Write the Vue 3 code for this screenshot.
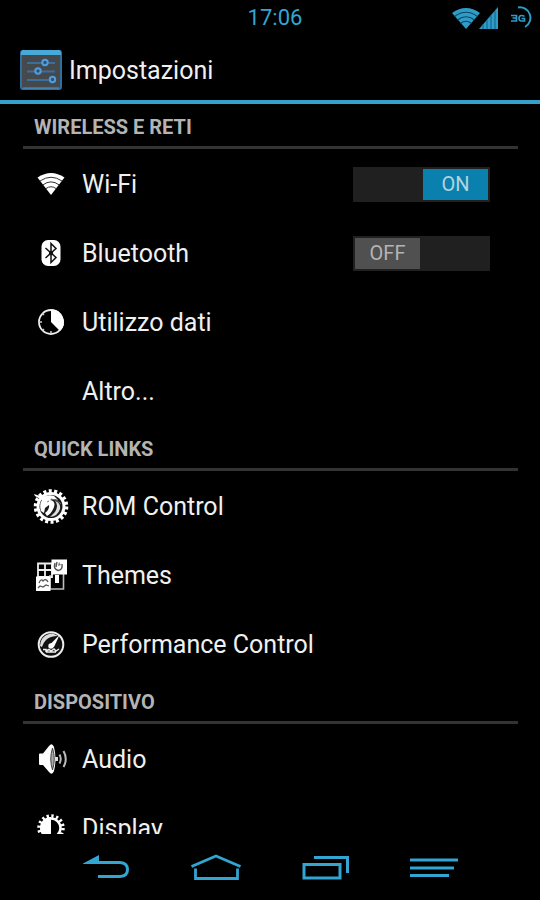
<script setup>
import { reactive } from 'vue'

const sections = reactive([
  {
    title: 'WIRELESS E RETI',
    items: [
      { label: 'Wi-Fi', icon: 'wifi', toggle: true, on: true },
      { label: 'Bluetooth', icon: 'bluetooth', toggle: true, on: false },
      { label: 'Utilizzo dati', icon: 'data' },
      { label: 'Altro...', icon: '' },
    ],
  },
  {
    title: 'QUICK LINKS',
    items: [
      { label: 'ROM Control', icon: 'rom' },
      { label: 'Themes', icon: 'themes' },
      { label: 'Performance Control', icon: 'performance' },
    ],
  },
  {
    title: 'DISPOSITIVO',
    items: [
      { label: 'Audio', icon: 'audio' },
      { label: 'Display', icon: 'display' },
    ],
  },
])
</script>

<template>
  <div class="screen">
    <div class="status">
      <time class="clock">17:06</time>
      <div class="indicators">
        <svg class="signals" viewBox="0 0 46 24" aria-hidden="true">
          <path d="M0 7Q14 -3 28 7L14 23Z" fill="#2f9cc8" />
          <path d="M2.500 10.500Q14 2 25.500 10.500M5.500 14Q14 7.500 22.500 14M8.500 17.500Q14 13 19.500 17.500" fill="none" stroke="#0b4660" stroke-width="1.2" />
          <path d="M27 23L46 1V23Z" fill="#2f9cc8" />
          <path d="M31 18V23M35 14V23M39 9V23M43 5V23" stroke="#0f6084" stroke-width="1" />
        </svg>
        <svg class="battery" viewBox="0 0 22 24" aria-hidden="true">
          <g fill="none" stroke="#2f9cc8">
            <path d="M8 1.500A10.500 10.500 0 0 1 15 21" stroke-width="2" />
            <path d="M1 9.500H6.500V12H2.500M6.500 12V15H1M14.500 10.500Q13.500 9.500 11.500 9.500Q9 9.500 9 12.200T11.500 15H14.500V12.500H11.500" stroke-width="1.600" />
          </g>
        </svg>
      </div>
    </div>

    <header class="titlebar">
      <svg class="app-icon" viewBox="0 0 42 40" aria-hidden="true">
        <rect x="1" y="1" width="40" height="38" rx="2" fill="#46494c" stroke="#2d6f9e" stroke-width="2" />
        <path d="M1 3Q1 0 3 0H39Q41 0 41 3V5H1Z" fill="#46a9d8" />
        <path d="M3 38H39" stroke="#5d95c0" stroke-width="1" />
        <path d="M7 13H35M7 21.500H35M7 30H32" stroke="#396f9f" stroke-width="2" />
        <g fill="#33516d" stroke="#4f9ddd" stroke-width="2">
          <circle cx="25" cy="12.500" r="2.700" />
          <circle cx="18" cy="21" r="2.700" />
          <circle cx="32.500" cy="29.500" r="2.700" />
        </g>
      </svg>
      <h1>Impostazioni</h1>
    </header>

    <main class="list">
      <section v-for="s in sections" :key="s.title">
        <h2>{{ s.title }}</h2>
        <div v-for="item in s.items" :key="item.label" class="row">
          <a href="#" class="link">
            <span class="icon">
              <svg v-if="item.icon" viewBox="0 0 40 40" aria-hidden="true">
                <template v-if="item.icon === 'wifi'">
                  <path d="M6.500 12.500Q20 3.500 33.500 12.500L20 30Z" fill="#fff" />
                  <path d="M9 16Q20 8.500 31 16M12 19.800Q20 14 28 19.800M15 23.500Q20 20 25 23.500" fill="none" stroke="#333" stroke-width="1" />
                </template>
                <template v-else-if="item.icon === 'bluetooth'">
                  <rect x="10.500" y="6" width="19" height="26" rx="6.500" fill="#fff" />
                  <path d="M14.500 14L25 23.500L20 28.500V9.500L25 14.500L14.500 24" fill="none" stroke="#111" stroke-width="1.500" />
                  <circle cx="20" cy="19" r="2.200" fill="#111" />
                </template>
                <template v-else-if="item.icon === 'data'">
                  <circle cx="20" cy="19" r="12" fill="none" stroke="#eee" stroke-width="1.800" />
                  <path d="M20 19V6.500A12.500 12.500 0 0 1 29 28Z" fill="#fff" />
                  <path d="M8 19H11M20 31V28M11.500 10.500L13 12M11.500 27.500L13 26" stroke="#ccc" stroke-width="1.500" />
                </template>
                <template v-else-if="item.icon === 'rom'">
                  <circle cx="20" cy="19.500" r="15.500" fill="none" stroke="#fff" stroke-width="3.600" stroke-dasharray="3 2.410" />
                  <circle cx="20" cy="19.500" r="13" fill="#1a1a1a" stroke="#fff" stroke-width="3" />
                  <path d="M3 7L12 10Q18 7 23 9L27 13Q21 11 19 13Q25 14 23 20Q21 26 16 29L14 26Q19 22 18 18L14 21L13 26L10 24Q8 17 11 13L4 9Z" fill="#fff" />
                  <path d="M24 14Q28 18 24 25L19 30Q27 29 29 22Q30 16 24 14Z" fill="#ddd" />
                  <path d="M20 12Q26 12 30 17M16 15L18 14" fill="none" stroke="#777" stroke-width="1" />
                </template>
                <template v-else-if="item.icon === 'themes'">
                  <path d="M7 7.500H21V21H7ZM7 14H21M14 7V21" fill="none" stroke="#eee" stroke-width="1.800" />
                  <path d="M19 19V33H32.500V18" fill="none" stroke="#bbb" stroke-width="1.600" />
                  <rect x="20.500" y="3.500" width="15.500" height="15" fill="#fff" />
                  <path d="M24 19H28V27H24Z" fill="#fff" />
                  <path d="M24 7Q22 13 27 14.500Q32 14 31 8M26 6L25 11" fill="none" stroke="#555" stroke-width="1.400" />
                  <path d="M28 6L30 9L27 10Z" fill="#777" />
                  <rect x="5" y="20.500" width="14.500" height="14.500" fill="#fff" />
                  <path d="M8 27Q10 22 12 25Q15 22 17 26M7 32L9 30L12 31L15 29L18 30" fill="none" stroke="#555" stroke-width="1.300" />
                </template>
                <template v-else-if="item.icon === 'performance'">
                  <circle cx="20" cy="19.500" r="12.300" fill="#111" stroke="#eee" stroke-width="2" />
                  <path d="M9 21Q10 9 22 8.500L27 11Q19 11 15 15Q12 18 11 22Z" fill="#ddd" />
                  <path d="M28.500 10L23 22L18 20.500Z" fill="#fff" />
                  <circle cx="20" cy="21" r="2.700" fill="#fff" />
                  <path d="M12 24.500H15V26L18 24.500L20 26L23 24L25 26L28 24M15 27H25" fill="none" stroke="#eee" stroke-width="1.500" />
                </template>
                <template v-else-if="item.icon === 'audio'">
                  <path d="M8 14.500Q8 13.500 9 13.500H12L18 6Q21 2 23 7Q26 19 23 31Q21 36 18 32L12 25H9Q8 25 8 24Z" fill="#fff" />
                  <path d="M21.500 8Q18 19 21.500 30Q25 19 21.500 8" fill="#aaa" stroke="#444" stroke-width="1" />
                  <path d="M24 17H27V21H24Z" fill="#ddd" />
                  <path d="M28.500 14.500Q31 19 28.500 23.500M32.500 11Q37 19 32.500 27" fill="none" stroke="#bbb" stroke-width="2" />
                </template>
                <template v-else>
                  <circle cx="20" cy="19" r="12" fill="none" stroke="#fff" stroke-width="3.500" stroke-dasharray="2.300 2.410" />
                  <circle cx="20" cy="19" r="9.500" fill="#000" stroke="#fff" stroke-width="2.500" />
                  <path d="M20 8A11 11 0 0 0 20 30Z" fill="#fff" />
                </template>
              </svg>
            </span>
            <span>{{ item.label }}</span>
          </a>
          <button
            v-if="item.toggle"
            type="button"
            role="switch"
            class="switch"
            :class="{ on: item.on }"
            :aria-checked="item.on"
            :aria-label="item.label"
            @click="item.on = !item.on"
          >
            <span class="thumb">{{ item.on ? 'ON' : 'OFF' }}</span>
          </button>
        </div>
      </section>
    </main>

    <nav class="navbar">
      <button type="button" aria-label="Indietro">
        <svg viewBox="0 0 52 32" aria-hidden="true">
          <path d="M2 12.500L18 4V10H38V13H2Z" fill="#33a5d3" />
          <path d="M14 11.500H39Q46.500 12 46.500 18.500T39 25.500H17" fill="none" stroke="#33a5d3" stroke-width="3" />
        </svg>
      </button>
      <button type="button" aria-label="Home">
        <svg viewBox="0 0 52 32" aria-hidden="true">
          <path d="M1.500 15.500L26 5L50.500 15.500M5.500 17.500V27.500H47.500V17.500" fill="none" stroke="#33a5d3" stroke-width="2.800" />
        </svg>
      </button>
      <button type="button" aria-label="Recenti">
        <svg viewBox="0 0 52 32" aria-hidden="true">
          <path d="M6 13.500H42V27H6ZM16 6.500H49.500V22" fill="none" stroke="#33a5d3" stroke-width="3" />
        </svg>
      </button>
      <button type="button" aria-label="Menu">
        <svg viewBox="0 0 52 32" aria-hidden="true">
          <path d="M3 9H51M3 17H47M3 24.500H42" fill="none" stroke="#33a5d3" stroke-width="3.200" />
        </svg>
      </button>
    </nav>
  </div>
</template>

<style>
body {
  background: #000;
}
</style>

<style scoped>
.screen {
  display: flex;
  flex-direction: column;
  height: 100vh;
  overflow: hidden;
  background: #000;
  color: #f0f0f0;
  font-family: Roboto, 'Liberation Sans', sans-serif;
}
button {
  padding: 0;
  border: 0;
  background: none;
  font: inherit;
  cursor: pointer;
}
.status {
  display: grid;
  grid-template-columns: 1fr auto 1fr;
  align-items: center;
  flex: none;
  height: 36px;
  padding: 0 8px;
  color: #33a5d3;
}
.clock {
  grid-column: 2;
  padding-left: 10px;
  font-size: 22px;
  line-height: 36px;
}
.indicators {
  display: flex;
  justify-content: flex-end;
  gap: 12px;
}
.signals {
  width: 46px;
  height: 24px;
}
.battery {
  width: 22px;
  height: 24px;
}
.titlebar {
  display: flex;
  align-items: center;
  gap: 7px;
  flex: none;
  height: 68px;
  box-sizing: border-box;
  padding: 4px 20px 0;
  border-bottom: 4px solid #34a0cc;
}
.app-icon {
  width: 42px;
  height: 40px;
}
h1 {
  margin: 0;
  font-size: 25px;
  font-weight: 400;
}
.list {
  flex: 1;
  min-height: 0;
  overflow: hidden;
  padding: 0 22px 0 23px;
}
h2 {
  height: 45px;
  box-sizing: border-box;
  margin: 0 0 1px;
  padding-left: 11px;
  border-bottom: 3px solid #333;
  color: #b4b4b4;
  font-size: 20px;
  font-weight: 700;
  line-height: 46px;
}
.row {
  display: flex;
  align-items: center;
  height: 69px;
  padding-right: 28px;
}
.link {
  display: flex;
  align-items: center;
  flex: 1;
  gap: 11px;
  padding-left: 8px;
  color: inherit;
  font-size: 25px;
  line-height: 69px;
  text-decoration: none;
}
.icon {
  display: flex;
  width: 40px;
  height: 40px;
}
.icon svg {
  width: 40px;
  height: 40px;
}
.switch {
  display: flex;
  width: 137px;
  height: 35px;
  box-sizing: border-box;
  padding: 2px;
  background: #202020;
}
.switch.on {
  justify-content: flex-end;
}
.thumb {
  width: 65px;
  height: 31px;
  background: #505050;
  color: #b4b4b4;
  font-size: 20px;
  line-height: 31px;
  text-align: center;
}
.on .thumb {
  background: #0a80ae;
  color: #b4d3df;
}
.navbar {
  display: flex;
  flex: none;
  height: 66px;
  padding: 0 53px;
}
.navbar button {
  display: flex;
  align-items: center;
  justify-content: center;
  flex: 1;
}
.navbar svg {
  width: 52px;
  height: 32px;
}
</style>
